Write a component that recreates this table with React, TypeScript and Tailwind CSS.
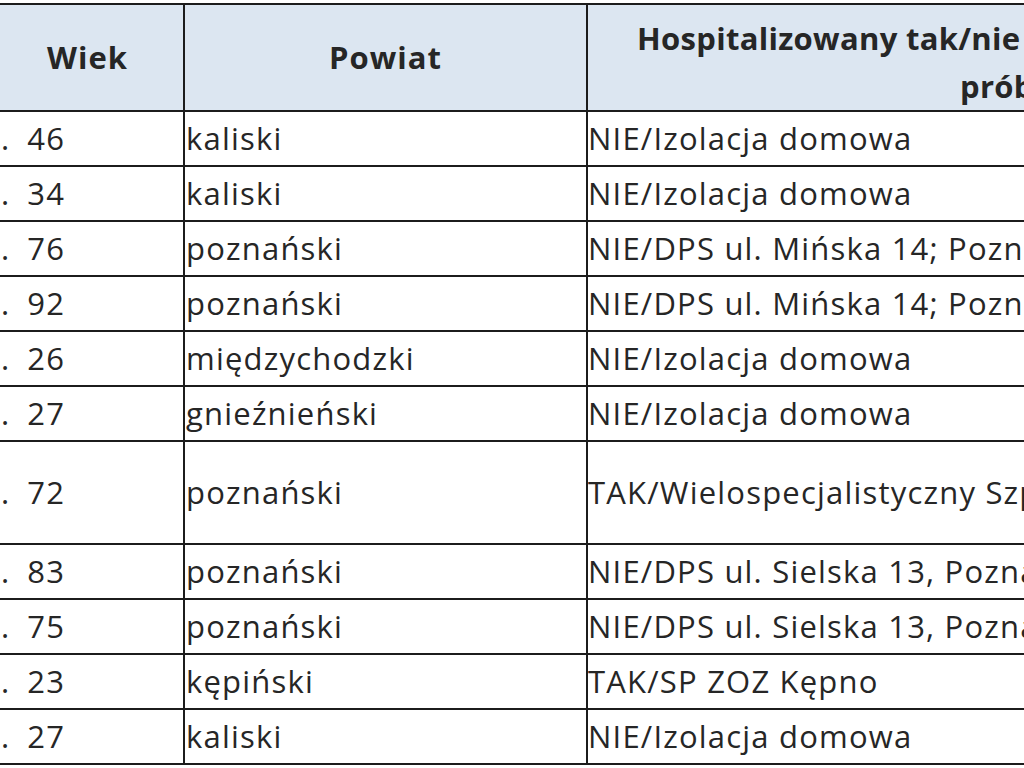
const rows = [
  { age: "46", powiat: "kaliski", hosp: "NIE/Izolacja domowa" },
  { age: "34", powiat: "kaliski", hosp: "NIE/Izolacja domowa" },
  { age: "76", powiat: "poznański", hosp: "NIE/DPS ul. Mińska 14; Poznań" },
  { age: "92", powiat: "poznański", hosp: "NIE/DPS ul. Mińska 14; Poznań" },
  { age: "26", powiat: "międzychodzki", hosp: "NIE/Izolacja domowa" },
  { age: "27", powiat: "gnieźnieński", hosp: "NIE/Izolacja domowa" },
  { age: "72", powiat: "poznański", hosp: "TAK/Wielospecjalistyczny Szpital", tall: true },
  { age: "83", powiat: "poznański", hosp: "NIE/DPS ul. Sielska 13, Poznań" },
  { age: "75", powiat: "poznański", hosp: "NIE/DPS ul. Sielska 13, Poznań" },
  { age: "23", powiat: "kępiński", hosp: "TAK/SP ZOZ Kępno" },
  { age: "27", powiat: "kaliski", hosp: "NIE/Izolacja domowa" },
]

export default function App() {
  return (
    <div
      className="w-[1024px] h-[768px] overflow-hidden bg-white pt-[3px] text-[#262626]"
      style={{ fontFamily: '"Open Sans", "Liberation Sans", sans-serif' }}
    >
      <div className="w-[1500px] border-t-2 border-[#1c1c1c]">
        {/* header */}
        <div className="flex h-[107px] bg-[#dce6f1] border-b-2 border-[#1c1c1c] text-[31px] font-bold tracking-[0.3px]">
          <div className="w-[183px] flex items-center justify-center pr-[8px] tracking-[1px]">Wiek</div>
          <div className="w-[403px] border-l-2 border-[#1c1c1c] flex items-center justify-center tracking-[1px]">
            Powiat
          </div>
          <div className="flex-1 border-l-2 border-[#1c1c1c] flex flex-col justify-center pt-[8px] leading-[48px] whitespace-nowrap">
            <span className="pl-[49px]">Hospitalizowany tak/nie</span>
            <span className="pl-[372px]">próby</span>
          </div>
        </div>

        {/* rows */}
        {rows.map((r, i) => (
          <div
            key={i}
            className={`flex border-b-2 border-[#1c1c1c] text-[31px] tracking-[1.2px] whitespace-nowrap ${
              r.tall ? "h-[103px]" : "h-[55px]"
            }`}
          >
            <div className="w-[183px] flex items-center">
              <span className="pl-[1px]">.</span>
              <span className="pl-[17px]">{r.age}</span>
            </div>
            <div className="w-[403px] border-l-2 border-[#1c1c1c] flex items-center pl-[1px]">
              {r.powiat}
            </div>
            <div className="flex-1 border-l-2 border-[#1c1c1c] flex items-center">
              {r.hosp}
            </div>
          </div>
        ))}
      </div>
    </div>
  )
}
